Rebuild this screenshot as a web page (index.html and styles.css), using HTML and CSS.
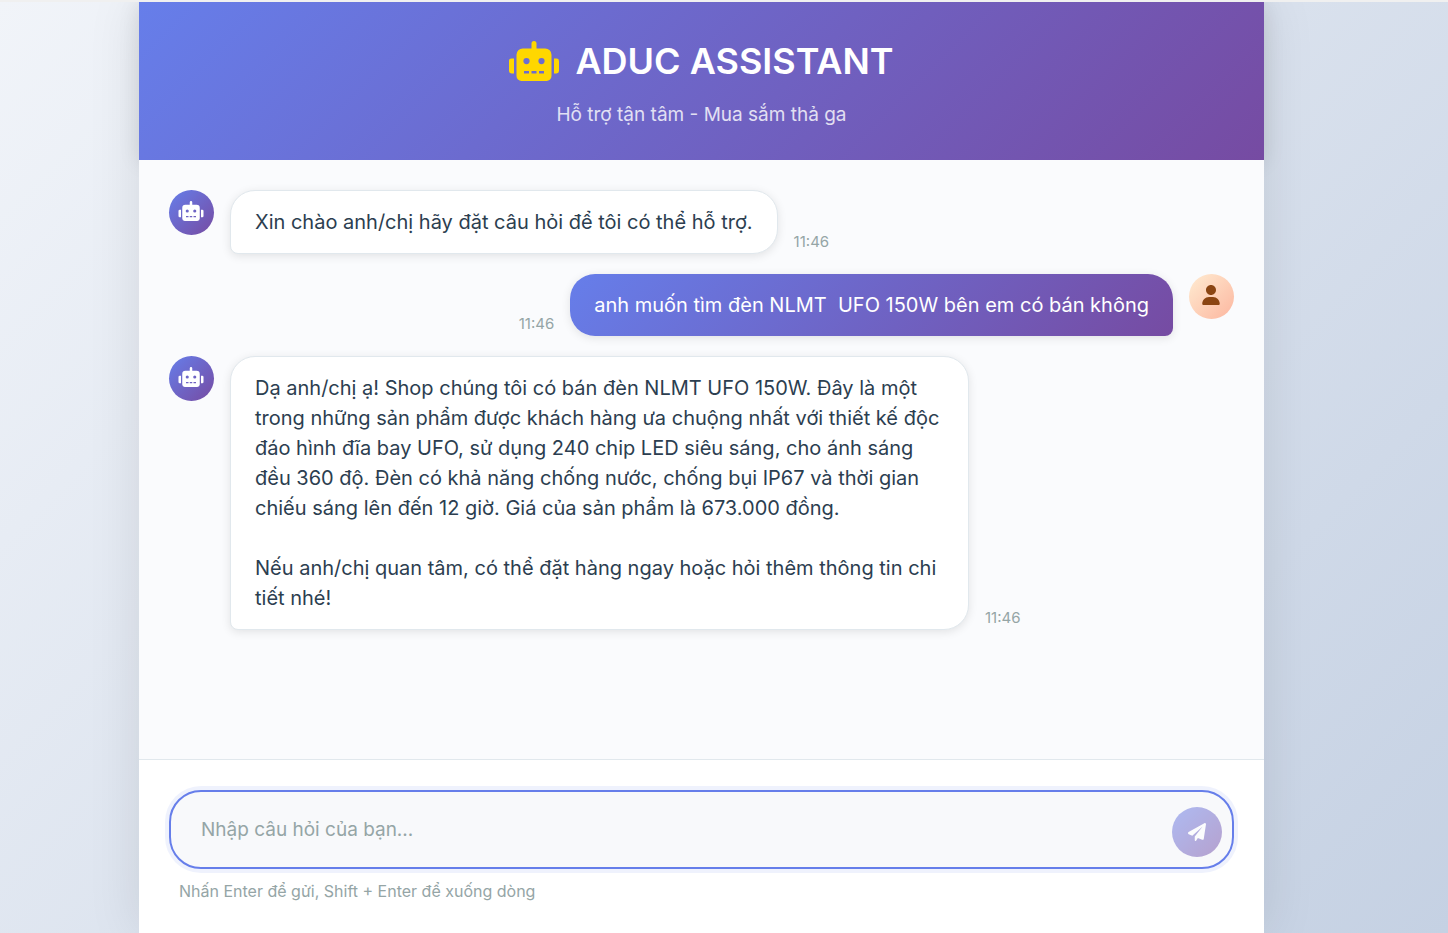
FILE: index.html
```html
<!DOCTYPE html>
<html lang="vi">
<head>
<meta charset="utf-8">
<meta name="viewport" content="width=device-width, initial-scale=1">
<title>ADUC ASSISTANT</title>
<link rel="stylesheet" href="styles.css">
</head>
<body>
<svg class="sprite" aria-hidden="true">
  <symbol id="robot" viewBox="0 0 640 512"><path d="M32,224H64V416H32A31.96,31.96,0,0,1,0,384V256A31.96,31.96,0,0,1,32,224Zm512-48V448a64.06,64.06,0,0,1-64,64H160a64.06,64.06,0,0,1-64-64V176a79.97,79.97,0,0,1,80-80H288V32a32,32,0,0,1,64,0V96H464A79.97,79.97,0,0,1,544,176ZM264,256a40,40,0,1,0-40,40A40,40,0,0,0,264,256Zm-8,128H192v32h64Zm96,0H288v32h64ZM456,256a40,40,0,1,0-40,40A40,40,0,0,0,456,256Zm-8,128H384v32h64ZM640,256V384a31.96,31.96,0,0,1-32,32H576V224h32A31.96,31.96,0,0,1,640,256Z"/></symbol>
  <symbol id="user" viewBox="0 0 448 512"><path d="M224 256c70.7 0 128-57.31 128-128s-57.3-128-128-128C153.3 0 96 57.31 96 128S153.3 256 224 256zM274.7 304H173.3C77.61 304 0 381.6 0 477.3c0 19.14 15.52 34.67 34.66 34.67h378.7C432.5 512 448 496.5 448 477.3C448 381.6 370.4 304 274.7 304z"/></symbol>
  <symbol id="plane" viewBox="0 0 512 512"><path d="M511.6 36.86l-64 415.1c-1.5 9.734-7.375 18.22-15.97 23.05c-4.844 2.719-10.27 4.097-15.68 4.097c-4.188 0-8.319-.8154-12.29-2.472l-122.6-51.1l-50.86 76.29C226.3 508.5 219.8 512 212.8 512C201.3 512 192 502.7 192 491.2v-96.18c0-7.115 2.372-14.03 6.742-19.64L416 96l-293.7 264.3L19.69 317.5C8.438 312.8 .8125 302.2 .0625 289.1s5.47-23.72 16.06-29.77l448-255.1c10.69-6.109 23.88-5.547 34 1.406S513.5 24.72 511.6 36.86z"/></symbol>
</svg>
<div class="app">
  <header class="header">
    <h1 class="title"><svg class="title-icon" aria-hidden="true"><use href="#robot"/></svg>ADUC ASSISTANT</h1>
    <p class="subtitle">Hỗ trợ tận tâm - Mua sắm thả ga</p>
  </header>
  <main class="messages">
    <article class="message">
      <div class="avatar avatar-bot"><svg class="bot-icon" aria-hidden="true"><use href="#robot"/></svg></div>
      <div class="bubble bubble-bot">Xin chào anh/chị hãy đặt câu hỏi để tôi có thể hỗ trợ.</div>
      <time class="time">11:46</time>
    </article>
    <article class="message message-user">
      <div class="avatar avatar-user"><svg class="user-icon" aria-hidden="true"><use href="#user"/></svg></div>
      <div class="bubble bubble-user">anh muốn tìm đèn NLMT  UFO 150W bên em có bán không</div>
      <time class="time">11:46</time>
    </article>
    <article class="message">
      <div class="avatar avatar-bot"><svg class="bot-icon" aria-hidden="true"><use href="#robot"/></svg></div>
      <div class="bubble bubble-bot">Dạ anh/chị ạ! Shop chúng tôi có bán đèn NLMT UFO 150W. Đây là một trong những sản phẩm được khách hàng ưa chuộng nhất với thiết kế độc đáo hình đĩa bay UFO, sử dụng 240 chip LED siêu sáng, cho ánh sáng đều 360 độ. Đèn có khả năng chống nước, chống bụi IP67 và thời gian chiếu sáng lên đến 12 giờ. Giá của sản phẩm là 673.000 đồng.

Nếu anh/chị quan tâm, có thể đặt hàng ngay hoặc hỏi thêm thông tin chi tiết nhé!</div>
      <time class="time">11:46</time>
    </article>
  </main>
  <form class="composer">
    <div class="field">
      <textarea class="input" rows="1" placeholder="Nhập câu hỏi của bạn..." aria-label="Nhập câu hỏi của bạn"></textarea>
      <button class="send" type="button" aria-label="Gửi" disabled><svg class="send-icon" aria-hidden="true"><use href="#plane"/></svg></button>
    </div>
    <p class="hint">Nhấn Enter để gửi, Shift + Enter để xuống dòng</p>
  </form>
</div>
</body>
</html>
```
FILE: styles.css
```css
* {
  box-sizing: border-box;
}

body {
  margin: 0;
  min-height: 100vh;
  display: flex;
  justify-content: center;
  padding-right: 45px;
  border-top: 2px solid #f0f0f0;
  background: linear-gradient(135deg, #f1f4f9 0%, #c5d1e3 100%);
  font-family: Inter, "Noto Sans", sans-serif;
  color: #2c3e50;
}

.sprite {
  position: absolute;
  width: 0;
  height: 0;
}

.app {
  flex: 1;
  max-width: 1125px;
  display: flex;
  flex-direction: column;
  background: #fff;
  box-shadow: 0 0 50px rgba(0, 0, 0, 0.1);
}

.header {
  padding: 30px;
  text-align: center;
  color: #fff;
  background: linear-gradient(135deg, #667eea 0%, #764ba2 100%);
  box-shadow: 0 2px 20px rgba(0, 0, 0, 0.1);
}

.title {
  display: flex;
  align-items: center;
  justify-content: center;
  gap: 16px;
  margin: 0 0 10px;
  font-size: 36px;
  font-weight: 600;
  line-height: 58px;
}

.title-icon {
  width: 50px;
  height: 40px;
  fill: #ffd700;
}

.subtitle {
  margin: 0;
  font-size: 19px;
  line-height: 30px;
  opacity: 0.8;
}

.messages {
  position: relative;
  flex: 1;
  display: flex;
  flex-direction: column;
  gap: 20px;
  padding: 30px;
  background: #fafbfd;
}

.message {
  display: flex;
  align-items: flex-start;
  gap: 16px;
}

.message-user {
  flex-direction: row-reverse;
}

.avatar {
  flex: none;
  display: flex;
  align-items: center;
  justify-content: center;
  width: 45px;
  height: 45px;
  padding: 0 1px 3px 0;
  border-radius: 50%;
}

.avatar-bot {
  background: linear-gradient(135deg, #667eea 0%, #764ba2 100%);
  fill: #fff;
}

.avatar-user {
  background: linear-gradient(135deg, #ffecd2 0%, #fcb69f 100%);
  fill: #8b4513;
}

.bot-icon {
  width: 26px;
  height: 20px;
}

.user-icon {
  width: 18px;
  height: 20px;
}

.bubble {
  max-width: 739px;
  padding: 16px 24px;
  border-radius: 25px;
  font-size: 20px;
  line-height: 30px;
  white-space: pre-wrap;
  box-shadow: 0 2px 10px rgba(0, 0, 0, 0.1);
}

.bubble-bot {
  border: 1px solid #e1e8ed;
  border-bottom-left-radius: 8px;
  background: #fff;
}

.bubble-user {
  border-bottom-right-radius: 8px;
  color: #fff;
  background: linear-gradient(135deg, #667eea 0%, #764ba2 100%);
}

.time {
  align-self: flex-end;
  font-size: 15px;
  line-height: 24px;
  color: #95a5a6;
}

.composer {
  padding: 30px;
  border-top: 1px solid #e1e8ed;
  background: #fff;
}

.field {
  position: relative;
  display: flex;
}

.input {
  flex: 1;
  height: 79px;
  padding: 23px 80px 20px 30px;
  border: 2px solid #667eea;
  border-radius: 32px;
  outline: none;
  resize: none;
  overflow: hidden;
  background: #f8f9fb;
  box-shadow: 0 0 0 4px rgba(102, 126, 234, 0.1);
  font-family: inherit;
  font-size: 19px;
  line-height: 30px;
  color: #2c3e50;
}

.input::placeholder {
  color: #95a5a6;
}

.send {
  position: absolute;
  right: 12px;
  bottom: 12px;
  display: flex;
  align-items: center;
  justify-content: center;
  width: 50px;
  height: 50px;
  padding: 0;
  border: 0;
  border-radius: 50%;
  background: linear-gradient(135deg, #667eea 0%, #764ba2 100%);
  fill: #fff;
  opacity: 0.5;
}

.send-icon {
  width: 18px;
  height: 18px;
}

.hint {
  margin: 10px 10px 0;
  font-size: 16px;
  line-height: 24px;
  color: #95a5a6;
}
```
